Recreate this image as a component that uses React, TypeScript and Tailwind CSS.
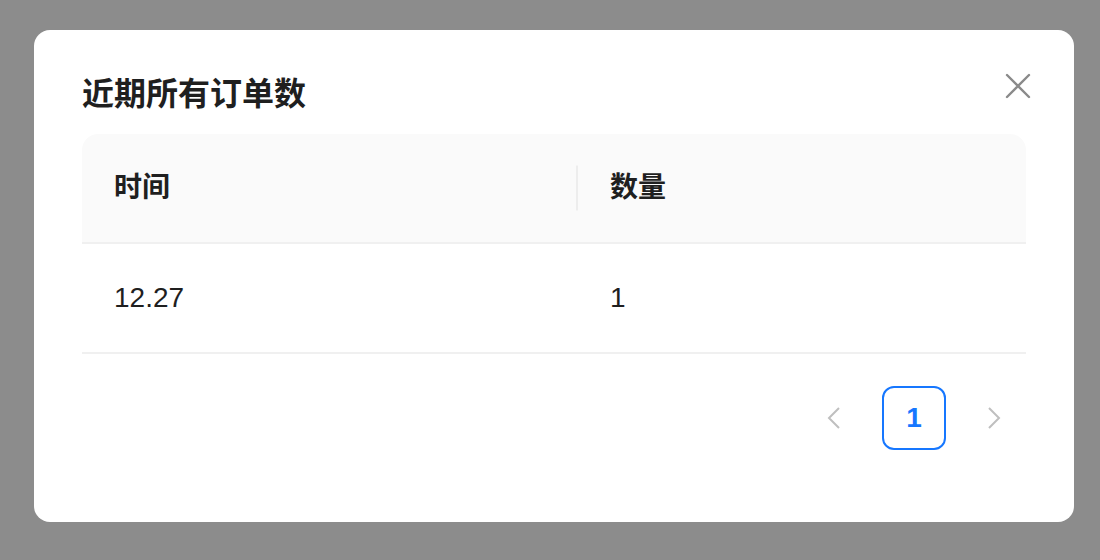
const font = {
  fontFamily: '"Liberation Sans", "Noto Sans CJK SC", sans-serif',
};

const CloseIcon = () => (
  <svg width="26" height="26" viewBox="0 0 26 26" fill="none">
    <path d="M2 2L24 24M24 2L2 24" stroke="#8a8a8a" strokeWidth="2.4" strokeLinecap="round" />
  </svg>
);

const Chevron = ({ dir }: { dir: "left" | "right" }) => (
  <svg width="16" height="24" viewBox="0 0 16 24" fill="none">
    <path
      d={dir === "left" ? "M13 2L3 12L13 22" : "M3 2L13 12L3 22"}
      stroke="#bfbfbf"
      strokeWidth="2"
      strokeLinejoin="miter"
    />
  </svg>
);

export default function App() {
  return (
    <div className="h-[560px] w-[1100px] bg-[#8c8c8c] pl-[34px] pt-[30px]" style={font}>
      <div className="w-[1040px] rounded-[16px] bg-white px-[48px] pt-[40px] pb-[72px]">
        <div className="mb-[16px] flex items-center justify-between">
          <h1 className="text-[32px] leading-[48px] font-semibold text-[#1f1f1f]">近期所有订单数</h1>
          <button className="-mr-[8px] -mt-[16px] flex h-[32px] w-[32px] items-center justify-center">
            <CloseIcon />
          </button>
        </div>

        <div className="text-[28px] leading-[44px] text-[#1f1f1f]">
          <div className="flex rounded-t-[16px] border-b-2 border-[#f0f0f0] bg-[#fafafa] font-semibold">
            <div className="relative w-[496px] p-[32px]">
              时间
              <span className="absolute right-0 top-1/2 h-[45px] w-[2px] -translate-y-1/2 bg-[#ededed]" />
            </div>
            <div className="flex-1 p-[32px]">数量</div>
          </div>
          <div className="flex border-b-2 border-[#f0f0f0]">
            <div className="w-[496px] p-[32px]">12.27</div>
            <div className="flex-1 p-[32px]">1</div>
          </div>
        </div>

        <div className="mt-[32px] flex justify-end gap-[16px]">
          <div className="flex h-[64px] w-[64px] items-center justify-center">
            <Chevron dir="left" />
          </div>
          <div className="flex h-[64px] w-[64px] items-center justify-center rounded-[12px] border-2 border-[#1677ff] text-[28px] font-bold text-[#1677ff]">
            1
          </div>
          <div className="flex h-[64px] w-[64px] items-center justify-center">
            <Chevron dir="right" />
          </div>
        </div>
      </div>
    </div>
  );
}
